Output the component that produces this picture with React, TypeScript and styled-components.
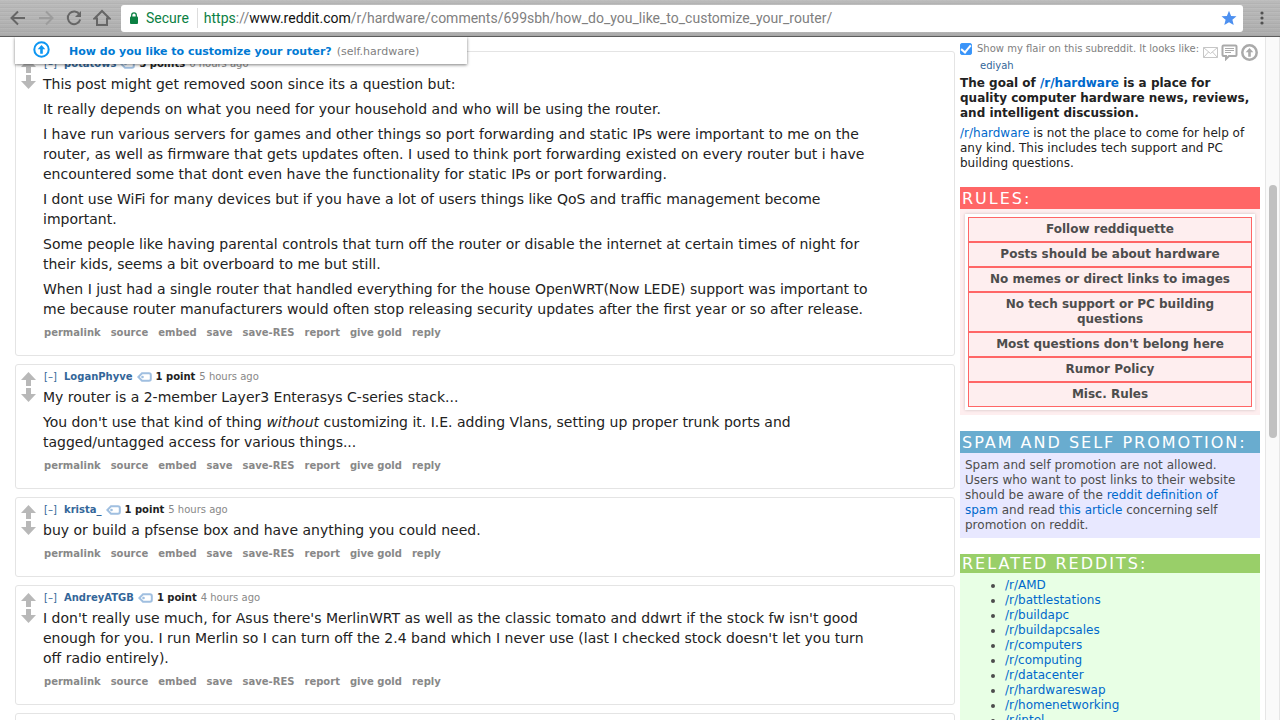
import React from "react";
import styled, { createGlobalStyle } from "styled-components";

const GlobalStyle = createGlobalStyle`
  * { box-sizing: border-box; }
  html, body, #root { height: 100%; }
  body {
    margin: 0;
    overflow: hidden;
    background: #fff;
    color: #222;
    font-family: Verdana, "DejaVu Sans", sans-serif;
    font-size: 12px;
    line-height: 15px;
  }
  a { color: #0069cc; text-decoration: none; }
  p { margin: 0 0 5px; }
`;

const Window = styled.div`
  display: flex;
  flex-direction: column;
  height: 100vh;
`;

const Toolbar = styled.header`
  display: flex;
  align-items: center;
  flex: none;
  height: 37px;
  padding: 0 4px;
  border-bottom: 1px solid #5c5c5c;
  background:
    repeating-linear-gradient(180deg, rgba(255, 255, 255, 0.07) 0 1px, transparent 1px 3px, rgba(0, 0, 0, 0.03) 3px 4px),
    linear-gradient(180deg, #bababa, #b3b3b3 60%, #acacac);
`;

const ToolButton = styled.button`
  display: flex;
  align-items: center;
  justify-content: center;
  flex: none;
  width: 28px;
  height: 28px;
  padding: 0;
  border: 0;
  background: none;
  color: #666;
  &:disabled { color: #9c9c9c; }
`;

const AddressBar = styled.div`
  display: flex;
  align-items: center;
  flex: 1;
  min-width: 0;
  height: 27px;
  margin: 0 5px;
  padding: 0 6px 0 8px;
  border-radius: 3px;
  background: #fff;
  color: #808080;
  font: 14px/20px Roboto, sans-serif;
  white-space: nowrap;
`;

const Secure = styled.span`
  margin-left: 7px;
  padding-right: 8px;
  border-right: 1px solid #ddd;
  color: #0b8043;
`;

const Url = styled.span`
  flex: 1;
  padding-left: 6px;
  overflow: hidden;
  i { font-style: normal; color: #0b8043; }
  b { font-weight: 400; color: #111; }
`;

const Viewport = styled.div`
  position: relative;
  display: flex;
  flex: 1;
  min-height: 0;
  overflow: hidden;
`;

const PostBanner = styled.div`
  position: absolute;
  top: 0;
  left: 15px;
  z-index: 2;
  display: flex;
  align-items: center;
  width: 452px;
  height: 27px;
  padding-left: 18px;
  background: #fff;
  color: #808080;
  font-size: 11px;
  line-height: 16px;
  box-shadow: 0 1px 3px rgba(0, 0, 0, 0.5);
  svg { margin-bottom: 2px; }
  a, span { padding-top: 2px; }
  a { margin: 0 5px 0 19px; color: #0079d3; font-weight: 700; }
`;

const Comments = styled.main`
  display: flex;
  flex-direction: column;
  flex: 1;
  gap: 8px;
  min-width: 0;
  padding: 14px 5px 0 15px;
`;

const Card = styled.article`
  display: flex;
  flex: none;
  padding: 4px 4px 14px 5px;
  border: 1px solid #e4e4e4;
  border-radius: 3px;
`;

const Votes = styled.div`
  display: flex;
  flex-direction: column;
  flex: none;
  gap: 2px;
  width: 15px;
  margin: 3px 7px 0 0;
`;

const VoteButton = styled.button<{ $down?: boolean }>`
  display: block;
  height: 14px;
  padding: 0;
  border: 0;
  background: none;
  svg { display: block; transform: ${(p) => (p.$down ? "scaleY(-1)" : "none")}; }
`;

const Entry = styled.div`
  flex: 1;
  min-width: 0;
`;

const Tagline = styled.div`
  display: flex;
  align-items: center;
  gap: 4px;
  height: 15px;
  padding-left: 1px;
  margin-bottom: 3px;
  color: #888;
  font-size: 10px;
  a { color: #369; }
  strong { color: #222; }
`;

const Toggle = styled.a`
  width: 16px;
`;

const Author = styled.a`
  font-weight: 700;
`;

const TagButton = styled.button`
  display: flex;
  padding: 0;
  border: 0;
  background: none;
`;

const Body = styled.div`
  max-width: 840px;
  font-size: 14px;
  line-height: 20px;
`;

const Actions = styled.nav`
  display: flex;
  gap: 10px;
  height: 17px;
  padding-left: 1px;
  font-size: 10px;
  font-weight: 700;
  line-height: 17px;
  a { color: #888; }
`;

const Sidebar = styled.aside`
  flex: none;
  width: 300px;
  margin-right: 5px;
  padding-top: 4px;
  > p { padding-right: 5px; }
`;

const Flair = styled.label`
  display: flex;
  align-items: center;
  gap: 5px;
  height: 15px;
  color: #808080;
  font-size: 10px;
  white-space: nowrap;
`;

const Checkbox = styled.input`
  display: grid;
  place-items: center;
  width: 12px;
  height: 12px;
  margin: 0;
  border-radius: 3px;
  background: #fff;
  box-shadow: inset 0 0 0 1px #3b99fc;
  appearance: none;
  &:checked { background: #3b93f7; }
  &:checked::after {
    content: "";
    width: 4px;
    height: 8px;
    margin-bottom: 2px;
    border: solid #fff;
    border-width: 0 2px 2px 0;
    transform: rotate(40deg);
  }
`;

const FlairName = styled.a`
  display: block;
  margin: 2px 0 3px 20px;
  color: #369;
  font-size: 10px;
`;

const QuickLinks = styled.div`
  position: absolute;
  top: 7px;
  right: 22px;
  display: flex;
  align-items: center;
  gap: 3px;
`;

const IconButton = styled.button`
  display: flex;
  padding: 0;
  border: 0;
  background: none;
`;

const SectionTitle = styled.h2<{ $color: string; $short?: boolean }>`
  height: ${(p) => (p.$short ? 19 : 22)}px;
  margin: 16px 0 0;
  padding-left: 2px;
  background: ${(p) => p.$color};
  color: #fff;
  font-size: 16px;
  font-weight: 400;
  line-height: ${(p) => (p.$short ? 20 : 23)}px;
  letter-spacing: 2px;
  white-space: nowrap;
`;

const Panel = styled.section<{ $color: string }>`
  padding: 5px;
  background: ${(p) => p.$color};
  color: #4d4d4d;
  > p { margin: 0; padding-right: 10px; }
`;

const RuleTable = styled.table`
  width: 100%;
  padding: 3px;
  border-spacing: 0;
  background: #fff;
  box-shadow: 0 0 3px rgba(0, 0, 0, 0.2);
  th {
    padding: 4px 12px;
    border: 1px solid #f66;
    background: #feeeef;
    font-weight: 700;
  }
`;

const RedditList = styled.ul`
  margin: 0;
  padding-left: 40px;
`;

const Scrollbar = styled.div`
  flex: none;
  width: 15px;
  padding: 148px 2px 0 3px;
  border: solid #e6e6e6;
  border-width: 0 1px;
  background: #fafafa;
`;

const Thumb = styled.div`
  height: 253px;
  border-radius: 4px;
  background: #c1c1c1;
`;

const stroke = { fill: "none", stroke: "currentColor", strokeWidth: 2 };

const Arrow = () => (
  <svg width="15" height="14" viewBox="0 0 15 14">
    <path d="M7.5 0 15 8H10V14H5V8H0Z" fill="#b8b8b8" />
  </svg>
);

const Tag = () => (
  <svg width="15" height="10" viewBox="0 0 15 10">
    <path d="M5 1.200H12Q13.800 1.200 13.800 3V7Q13.800 8.800 12 8.800H5L1.300 5Z" fill="#fff" stroke="#a0bfe0" strokeWidth="2" />
    <circle cx="5.500" cy="5" r="1.300" fill="#a0bfe0" />
  </svg>
);

const UpCircle = ({ color, ring = 2 }: { color: string; ring?: number }) => (
  <svg width="17" height="17" viewBox="0 0 17 17">
    <circle cx="8.500" cy="8.500" r="7.200" fill="none" stroke={color} strokeWidth={ring} />
    <path d="M8.500 3.900 12.300 8.200H9.800V12.800H7.200V8.200H4.700Z" fill={color} />
  </svg>
);

const ACTIONS = ["permalink", "source", "embed", "save", "save-RES", "report", "give gold", "reply"];

type Comment = { author: string; points: string; age: string; text: React.ReactNode[] };

const COMMENTS: Comment[] = [
  {
    author: "potatows",
    points: "3 points",
    age: "6 hours ago",
    text: [
      "This post might get removed soon since its a question but:",
      "It really depends on what you need for your household and who will be using the router.",
      "I have run various servers for games and other things so port forwarding and static IPs were important to me on the router, as well as firmware that gets updates often. I used to think port forwarding existed on every router but i have encountered some that dont even have the functionality for static IPs or port forwarding.",
      "I dont use WiFi for many devices but if you have a lot of users things like QoS and traffic management become important.",
      "Some people like having parental controls that turn off the router or disable the internet at certain times of night for their kids, seems a bit overboard to me but still.",
      "When I just had a single router that handled everything for the house OpenWRT(Now LEDE) support was important to me because router manufacturers would often stop releasing security updates after the first year or so after release.",
    ],
  },
  {
    author: "LoganPhyve",
    points: "1 point",
    age: "5 hours ago",
    text: [
      "My router is a 2-member Layer3 Enterasys C-series stack...",
      <>You don't use that kind of thing <em>without</em> customizing it. I.E. adding Vlans, setting up proper trunk ports and tagged/untagged access for various things...</>,
    ],
  },
  {
    author: "krista_",
    points: "1 point",
    age: "5 hours ago",
    text: ["buy or build a pfsense box and have anything you could need."],
  },
  {
    author: "AndreyATGB",
    points: "1 point",
    age: "4 hours ago",
    text: [
      "I don't really use much, for Asus there's MerlinWRT as well as the classic tomato and ddwrt if the stock fw isn't good enough for you. I run Merlin so I can turn off the 2.4 band which I never use (last I checked stock doesn't let you turn off radio entirely).",
    ],
  },
];

const RULES = [
  "Follow reddiquette",
  "Posts should be about hardware",
  "No memes or direct links to images",
  "No tech support or PC building questions",
  "Most questions don't belong here",
  "Rumor Policy",
  "Misc. Rules",
];

const REDDITS = ["AMD", "battlestations", "buildapc", "buildapcsales", "computers", "computing", "datacenter", "hardwareswap", "homenetworking", "intel"];

function CommentCard({ author, points, age, text }: Comment) {
  return (
    <Card>
      <Votes>
        <VoteButton aria-label="upvote"><Arrow /></VoteButton>
        <VoteButton $down aria-label="downvote"><Arrow /></VoteButton>
      </Votes>
      <Entry>
        <Tagline>
          <Toggle href="#collapse">[–]</Toggle>
          <Author href="#user">{author}</Author>
          <TagButton aria-label="tag user"><Tag /></TagButton>
          <strong>{points}</strong>
          <span>{age}</span>
        </Tagline>
        <Body>{text.map((t, i) => <p key={i}>{t}</p>)}</Body>
        <Actions>{ACTIONS.map((a) => <a key={a} href="#action">{a}</a>)}</Actions>
      </Entry>
    </Card>
  );
}

export default function App() {
  return (
    <Window>
      <GlobalStyle />
      <Toolbar>
        <ToolButton aria-label="Back">
          <svg width="16" height="16" viewBox="0 0 16 16" {...stroke}><path d="M15 8H2M8 1.500 1.500 8 8 14.500" /></svg>
        </ToolButton>
        <ToolButton aria-label="Forward" disabled>
          <svg width="16" height="16" viewBox="0 0 16 16" {...stroke}><path d="M1 8H14M8 1.500 14.500 8 8 14.500" /></svg>
        </ToolButton>
        <ToolButton aria-label="Reload">
          <svg width="16" height="16" viewBox="0 0 16 16" {...stroke}>
            <path d="M13.500 4.500A6.300 6.300 0 1 0 14.200 9.500" />
            <path d="M15 1V7H9Z" fill="currentColor" stroke="none" />
          </svg>
        </ToolButton>
        <ToolButton aria-label="Home">
          <svg width="18" height="18" viewBox="0 0 18 18" {...stroke}><path d="M1.500 9.500 9 2 16.500 9.500H14V16H4V9.500Z" /></svg>
        </ToolButton>
        <AddressBar>
          <svg width="10" height="12" viewBox="0 0 10 12">
            <rect x="1" y="4.500" width="8" height="7.500" rx="1" fill="#0b8043" />
            <path d="M2.700 5V3.200a2.300 2.300 0 0 1 4.600 0V5" fill="none" stroke="#0b8043" strokeWidth="1.300" />
          </svg>
          <Secure>Secure</Secure>
          <Url><i>https</i>://<b>www.reddit.com</b>/r/hardware/comments/699sbh/how_do_you_like_to_customize_your_router/</Url>
          <IconButton aria-label="Bookmark">
            <svg width="16" height="16" viewBox="0 0 16 16">
              <path d="M8 .8 10.100 5.900 15.500 6.300 11.400 9.800 12.700 15.100 8 12.200 3.300 15.100 4.600 9.800.500 6.300 5.900 5.900Z" fill="#4d90f0" />
            </svg>
          </IconButton>
        </AddressBar>
        <ToolButton aria-label="Menu">
          <svg width="4" height="14" viewBox="0 0 4 14" fill="#505050">
            <circle cx="2" cy="2" r="1.600" /><circle cx="2" cy="7" r="1.600" /><circle cx="2" cy="12" r="1.600" />
          </svg>
        </ToolButton>
      </Toolbar>
      <Viewport>
        <PostBanner>
          <UpCircle color="#0d96f2" ring={2} />
          <a href="#post">How do you like to customize your router?</a>
          <span>(self.hardware)</span>
        </PostBanner>
        <Comments>
          {COMMENTS.map((c) => <CommentCard key={c.author} {...c} />)}
          <Card />
        </Comments>
        <Sidebar>
          <Flair><Checkbox type="checkbox" defaultChecked />Show my flair on this subreddit. It looks like:</Flair>
          <FlairName href="#user">ediyah</FlairName>
          <p><strong>The goal of <a href="#hw">/r/hardware</a> is a place for quality computer hardware news, reviews, and intelligent discussion.</strong></p>
          <p><a href="#hw">/r/hardware</a> is not the place to come for help of any kind. This includes tech support and PC building questions.</p>
          <SectionTitle $color="#f66">RULES:</SectionTitle>
          <Panel $color="#feeeef">
            <RuleTable>
              <tbody>{RULES.map((r) => <tr key={r}><th>{r}</th></tr>)}</tbody>
            </RuleTable>
          </Panel>
          <SectionTitle $color="#69accf">SPAM AND SELF PROMOTION:</SectionTitle>
          <Panel $color="#e8e8ff">
            <p>
              Spam and self promotion are not allowed. Users who want to post links to their website should be aware of
              the <a href="#spam">reddit definition of spam</a> and read <a href="#article">this article</a> concerning
              self promotion on reddit.
            </p>
          </Panel>
          <SectionTitle $color="#99cf69" $short>RELATED REDDITS:</SectionTitle>
          <Panel $color="#e8ffe5">
            <RedditList>{REDDITS.map((r) => <li key={r}><a href="#r">/r/{r}</a></li>)}</RedditList>
          </Panel>
        </Sidebar>
        <QuickLinks>
          <IconButton aria-label="Mail">
            <svg width="15" height="11" viewBox="0 0 15 11" fill="none" stroke="#c6c6c6"><path d="M.5.500H14.500V10.500H.500ZM.500.500 7.500 6.500 14.500.500M.500 10.500 5.500 5M14.500 10.500 9.500 5" /></svg>
          </IconButton>
          <IconButton aria-label="Chat">
            <svg width="17" height="17" viewBox="0 0 17 17" fill="none" stroke="#aaa">
              <path d="M2.500 1.500H14.500Q15.500 1.500 15.500 2.500V11Q15.500 12 14.500 12H8L5 15V12H2.500Q1.500 12 1.500 11V2.500Q1.500 1.500 2.500 1.500Z" strokeWidth="2" />
              <path d="M4 4.500H13M4 6.500H13M4 8.500H10" />
            </svg>
          </IconButton>
          <IconButton aria-label="Back to top"><UpCircle color="#aaa" ring={2.5} /></IconButton>
        </QuickLinks>
        <Scrollbar><Thumb /></Scrollbar>
      </Viewport>
    </Window>
  );
}
